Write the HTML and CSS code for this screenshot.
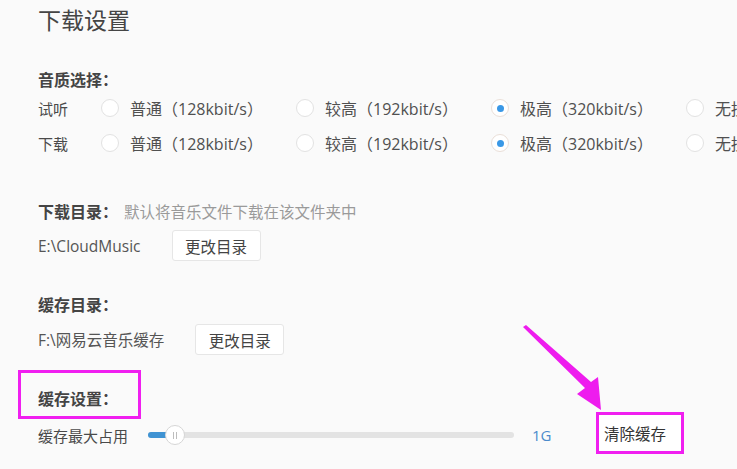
FILE: index.html
```html
<!DOCTYPE html>
<html lang="zh-CN">
<head>
<meta charset="utf-8">
<title>下载设置</title>
<link rel="stylesheet" href="styles.css">
</head>
<body>
<main class="page">
  <h1 class="title">下载设置</h1>

  <div class="heading quality-heading">音质选择：</div>
  <div class="row first-row">
    <span class="row-label">试听</span>
    <label class="opt"><span class="radio"></span><span>普通（128kbit/s）</span></label>
    <label class="opt"><span class="radio"></span><span>较高（192kbit/s）</span></label>
    <label class="opt"><span class="radio on"></span><span>极高（320kbit/s）</span></label>
    <label class="opt last"><span class="radio"></span><span>无损</span></label>
  </div>
  <div class="row second-row">
    <span class="row-label">下载</span>
    <label class="opt"><span class="radio"></span><span>普通（128kbit/s）</span></label>
    <label class="opt"><span class="radio"></span><span>较高（192kbit/s）</span></label>
    <label class="opt"><span class="radio on"></span><span>极高（320kbit/s）</span></label>
    <label class="opt last"><span class="radio"></span><span>无损</span></label>
  </div>

  <div class="heading dl-heading">下载目录：<span class="hint">默认将音乐文件下载在该文件夹中</span></div>
  <div class="dir-row dl-row">
    <span class="path">E:\CloudMusic</span>
    <button class="btn">更改目录</button>
  </div>

  <div class="heading cache-heading">缓存目录：</div>
  <div class="dir-row cache-row">
    <span class="path">F:\网易云音乐缓存</span>
    <button class="btn">更改目录</button>
  </div>

  <div class="heading set-heading">缓存设置：</div>
  <div class="slider-row">
    <span class="slider-label">缓存最大占用</span>
    <div class="slider">
      <div class="fill"></div>
      <div class="thumb"><i></i><i></i></div>
    </div>
    <span class="size">1G</span>
    <button class="btn clear-btn">清除缓存</button>
  </div>
</main>

<div class="mark mark-heading"></div>
<svg class="arrow" width="737" height="469" viewBox="0 0 737 469" aria-hidden="true">
  <polygon points="523,327 526,325 591,382 598,377 601,410 577,394 585,388" fill="#ee1cee"/>
</svg>
</body>
</html>
```

FILE: styles.css
```css
html, body {
  margin: 0;
  padding: 0;
}

body {
  width: 737px;
  height: 469px;
  overflow: hidden;
  background: #fafafa;
  font-family: "Open Sans", "Noto Sans CJK SC", sans-serif;
  font-size: 15px;
  color: #4a4a4a;
  position: relative;
}

.page {
  padding-left: 38px;
  padding-top: 4px;
}

.title {
  margin: 0;
  font-family: "Noto Sans CJK SC", sans-serif;
  font-size: 23px;
  font-weight: 400;
  line-height: 30px;
  color: #454545;
}

.heading {
  font-family: "Noto Sans CJK SC", sans-serif;
  font-size: 16px;
  font-weight: 700;
  line-height: 20px;
  color: #444;
  white-space: nowrap;
}

.hint {
  font-size: 15.5px;
  font-weight: 400;
  color: #9a9a9a;
  margin-left: 6px;
}

.quality-heading { margin-top: 35px; }
.dl-heading { margin-top: 48px; }
.cache-heading { margin-top: 33px; }
.set-heading { margin-top: 33px; }

.row {
  display: flex;
  align-items: center;
  height: 20px;
  white-space: nowrap;
}

.first-row { margin-top: 9px; }
.second-row { margin-top: 15px; }

.row-label {
  width: 63px;
  flex: none;
  font-family: "Noto Sans CJK SC", sans-serif;
}

.opt {
  display: flex;
  align-items: center;
  gap: 11px;
  width: 195px;
  flex: none;
  font-size: 16px;
  color: #505050;
}

.opt.last {
  width: auto;
}

.radio {
  width: 18px;
  height: 18px;
  box-sizing: border-box;
  border: 1px solid #e2e2e2;
  border-radius: 50%;
  background: #fff;
  display: flex;
  align-items: center;
  justify-content: center;
  flex: none;
}

.radio.on {
  border-color: #eadfd8;
}

.radio.on::after {
  content: "";
  width: 7px;
  height: 7px;
  border-radius: 50%;
  background: #3a98e6;
}

.dir-row {
  display: flex;
  align-items: center;
  gap: 31px;
  height: 31px;
}

.dl-row { margin-top: 9px; }
.cache-row { margin-top: 10px; }

.path {
  color: #555;
  font-size: 15.5px;
}

.btn {
  font-family: "Noto Sans CJK SC", sans-serif;
  font-size: 15.5px;
  color: #444;
  background: #fff;
  border: 1px solid #e6e6e6;
  border-radius: 3px;
  height: 31px;
  width: 89px;
  padding: 0;
  cursor: pointer;
}

.slider-row {
  display: flex;
  align-items: center;
  height: 42px;
  margin-top: 6px;
  white-space: nowrap;
}

.slider-label {
  font-family: "Noto Sans CJK SC", sans-serif;
  width: 110px;
  flex: none;
  color: #4a4a4a;
}

.slider {
  position: relative;
  width: 366px;
  height: 6px;
  border-radius: 3px;
  background: #e3e3e3;
  flex: none;
}

.fill {
  width: 27px;
  height: 6px;
  border-radius: 3px;
  background: #3f93d3;
}

.thumb {
  position: absolute;
  left: 17px;
  top: -7px;
  width: 20px;
  height: 20px;
  box-sizing: border-box;
  border: 1px solid #d6d6d6;
  border-radius: 50%;
  background: #fff;
  display: flex;
  align-items: center;
  justify-content: center;
  gap: 2px;
}

.thumb i {
  width: 1px;
  height: 7px;
  background: #bdbdbd;
}

.size {
  margin-left: 18px;
  color: #4a8bcc;
  width: 64px;
  flex: none;
}

.clear-btn {
  width: 88px;
  height: 42px;
  border: 3px solid #f01ff0;
  border-radius: 0;
  text-align: left;
  padding-left: 5px;
  margin-bottom: 4px;
  color: #333;
}

.mark {
  position: absolute;
  box-sizing: border-box;
  border: 3px solid #f01ff0;
  pointer-events: none;
}

.mark-heading {
  left: 18px;
  top: 370px;
  width: 123px;
  height: 49px;
}

.arrow {
  position: absolute;
  left: 0;
  top: 0;
  pointer-events: none;
}
```
